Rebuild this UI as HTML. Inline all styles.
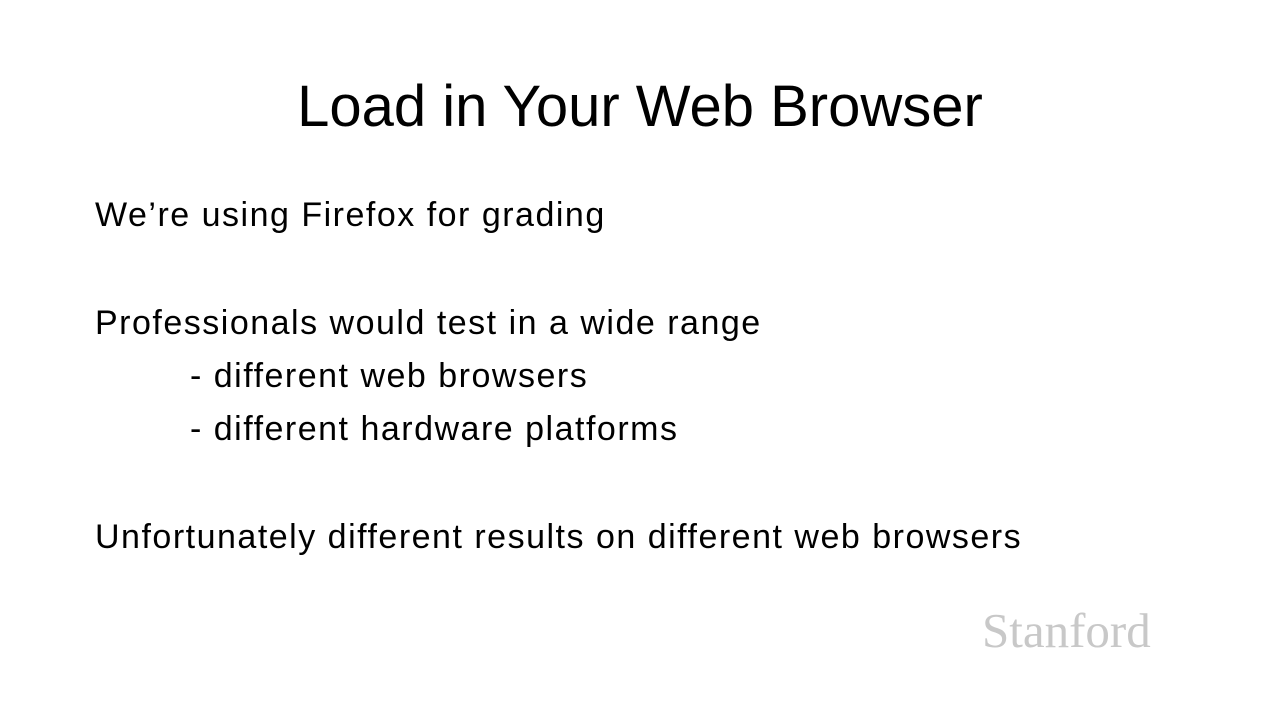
<!DOCTYPE html>
<html><head><style>
body{margin:0;width:1280px;height:720px;background:#fff;position:relative;overflow:hidden;font-family:"Liberation Sans",sans-serif;color:#000}
.t{position:absolute;left:0;width:1280px;text-align:center;top:72px;font-size:58px;line-height:70px}
.l{position:absolute;left:95px;font-size:34px;line-height:40px;white-space:nowrap;letter-spacing:1.5px}
.s{position:absolute;left:982px;top:604px;font-family:"Liberation Serif",serif;font-size:49px;color:#c8c8c8;line-height:54px}
</style></head><body>
<div class="t">Load in Your Web Browser</div>
<div class="l" style="top:195px">We’re using Firefox for grading</div>
<div class="l" style="top:303px">Professionals would test in a wide range</div>
<div class="l" style="top:356px;left:190px">- different web browsers</div>
<div class="l" style="top:409px;left:190px">- different hardware platforms</div>
<div class="l" style="top:517px">Unfortunately different results on different web browsers</div>
<div class="s">Stanford</div>
</body></html>
